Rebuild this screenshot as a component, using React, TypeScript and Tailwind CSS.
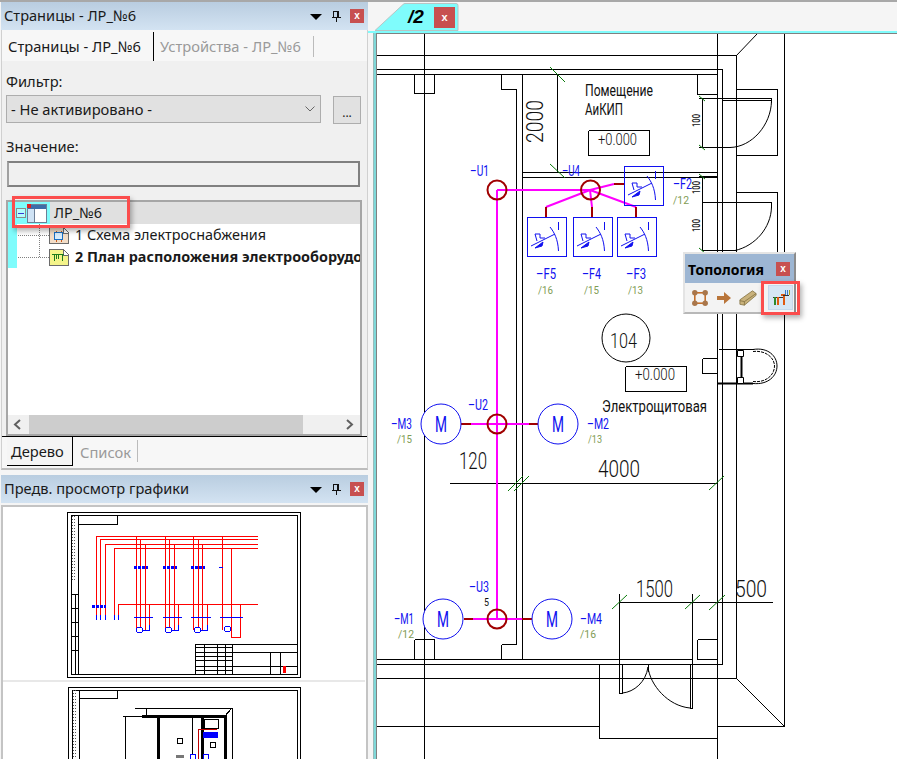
import React from "react";

const BLUE = "#1010f0";
const RED = "#a00000";
const MAG = "#ff00ff";

type Seg = [number, number, number, number];

const walls: Seg[] = [
  [376, 55, 736, 55], [376, 69, 722, 69], [376, 74, 717, 74],
  [424, 33, 424, 759], [717, 33, 717, 759], [784, 33, 784, 726],
  [736, 55, 736, 678], [722, 69, 722, 664], [516, 89, 516, 644], [522, 74, 522, 659],
  [414, 74, 414, 93], [434, 74, 434, 93], [414, 93, 434, 93],
  [501, 74, 501, 89], [501, 89, 516, 89],
  [697, 74, 697, 94], [697, 94, 717, 94],
  [522, 172, 717, 172], [522, 177, 717, 177],
  [557, 74, 557, 172],
  [736, 89, 777, 89], [777, 89, 777, 155], [736, 155, 777, 155],
  [736, 192, 777, 192], [777, 192, 777, 251],
  [698, 98, 771, 98], [722, 100, 771, 100], [771, 98, 771, 102], [702, 98, 702, 147], [698, 147, 730, 147],
  [698, 176, 717, 176], [702, 176, 702, 250], [702, 202, 771, 202], [771, 202, 771, 207], [702, 250, 735, 250],
  [702, 358, 717, 358], [702, 373, 717, 373], [702, 358, 702, 373],
  [718, 349, 753, 349],
  [414, 639, 414, 659], [434, 639, 434, 659], [414, 639, 434, 639],
  [501, 644, 501, 659], [501, 644, 516, 644],
  [697, 639, 717, 639], [697, 639, 697, 659], [697, 659, 717, 659],
  [376, 659, 692, 659], [376, 664, 722, 664], [376, 678, 736, 678], [376, 726, 599, 726],
  [599, 664, 599, 738], [599, 738, 717, 738], [717, 726, 784, 726],
  [449, 483, 717, 483],
  [619, 602, 772, 602], [619, 593, 619, 693], [692, 593, 692, 708],
  [622, 664, 622, 693], [619, 693, 622, 693], [690, 664, 690, 708], [690, 708, 692, 708],
  [625, 366, 686, 366], [625, 391, 686, 391], [625, 366, 625, 391], [686, 366, 686, 391],
  [588, 130, 649, 130], [588, 155, 649, 155], [588, 130, 588, 155], [649, 130, 649, 155],
];

const ticks: Seg[] = [
  [550, 67, 565, 82], [550, 164, 565, 178],
  [508, 491, 523, 476], [514, 491, 529, 476], [709, 490, 724, 476],
  [612, 609, 627, 595], [685, 609, 700, 595], [709, 610, 725, 595],
  [699, 96, 705, 101], [699, 145, 705, 150], [699, 174, 705, 179], [699, 248, 705, 253],
];

const segPath = (s: Seg[]) => s.map(([a, b, c, d]) => `M${a} ${b}L${c} ${d}`).join("");

function T({ x, y, w, s, c = "#111", t, rot, wt = 300 }: { x: number; y: number; w: number; s: number; c?: string; t: string; rot?: boolean; wt?: number }) {
  return (
    <text
      x={x}
      y={y}
      fontSize={s}
      fill={c}
      fontWeight={wt}
      textLength={w}
      lengthAdjust="spacingAndGlyphs"
      transform={rot ? `rotate(-90 ${x} ${y})` : undefined}
    >
      {t}
    </text>
  );
}

function Breaker({ x, y }: { x: number; y: number }) {
  return (
    <g transform={`translate(${x} ${y})`} fill="none" stroke={BLUE} strokeWidth="1">
      <rect x="0.5" y="0.5" width="39" height="39" />
      <path d="M31.5 5V13M23 10C27 15 31 22 31.5 34M4 29L28 17M8 17H13V21H18M8 17L10 24" />
      <path d="M8 31L16 25L15 29Z" fill={BLUE} />
    </g>
  );
}

function Motor({ x, y }: { x: number; y: number }) {
  return (
    <g>
      <circle cx={x} cy={y} r="20" fill="white" stroke={BLUE} />
      <T x={x - 6} y={y + 8} w={12} s={22} c={BLUE} t="M" wt={400} />
    </g>
  );
}

function Node({ x, y }: { x: number; y: number }) {
  return <circle cx={x} cy={y} r="9.5" fill="none" stroke={RED} strokeWidth="2" />;
}

function Plan() {
  return (
    <svg viewBox="377 34 520 725" className="w-[520px] h-[725px] block font-['Roboto',sans-serif]">
      <path d={segPath(walls)} transform="translate(.5 .5)" stroke="#000" fill="none" shapeRendering="crispEdges" />
      <path d={segPath(ticks)} stroke="#0a7a0a" fill="none" />
      {/* arcs and diagonals */}
      <path
        d="M736.5 55.5L757 34M736.5 678.5L784.5 726.5M771.5 101C771 125 752 147 730 147.5M771.5 207C771 228 755 246 735 250.5M622.5 693C634 692 646 682 648 667C650 685 668 706 690 708M648.5 664V672"
        stroke="#000"
        fill="none"
      />
      <circle cx="626" cy="338" r="24" fill="none" stroke="#000" />
      {/* door, lower right */}
      <path d="M718 383.5H753" stroke="#000" strokeWidth="2" />
      <path d="M741.5 356V377" stroke="#000" strokeWidth="2" />
      <path d="M737.5 350.5h6v6h-6zM737.5 377.5h6v6h-6z" fill="white" stroke="#000" />
      <path d="M753 349.5C768 347 777 356 777 366C777 376 768 385 753 383.5" fill="none" stroke="#000" strokeWidth="1" />
      <path d="M753 351.5C766 350 774.500 358 774.500 366C774.500 375 766 383 753 381.500" fill="none" stroke="#000" strokeDasharray="3 1" />
      {/* wires */}
      <path d="M497 190V618M497 190H590M590 190L546 207M590 190L592 207M590 190L636 207M590 190L614 184M471 424H529M473 619H522" stroke={MAG} strokeWidth="2" fill="none" />
      <path d="M546 207V217M592 207V217M636 207V217M614 184H624M461 424H471M529 424H539M464 619H473M522 619H532" stroke={RED} strokeWidth="2" fill="none" />
      <Node x={497} y={190} />
      <Node x={590.5} y={190} />
      <Node x={497} y={424} />
      <Node x={497} y={619} />
      <Breaker x={624} y={166} />
      <Breaker x={527} y={217} />
      <Breaker x={573} y={217} />
      <Breaker x={617} y={217} />
      <Motor x={441} y={424} />
      <Motor x={558} y={424} />
      <Motor x={443} y={619} />
      <Motor x={552} y={619} />
      {/* labels */}
      <T x={470} y={176} w={19} s={15} c={BLUE} t="–U1" wt={400} />
      <T x={562} y={176} w={18} s={15} c={BLUE} t="–U4" wt={400} />
      <T x={468} y={410} w={20} s={15} c={BLUE} t="–U2" wt={400} />
      <T x={469} y={592} w={20} s={15} c={BLUE} t="–U3" wt={400} />
      <T x={484} y={606} w={5} s={10} t="5" wt={400} />
      <T x={536} y={279} w={20} s={15} c={BLUE} t="–F5" wt={400} />
      <T x={582} y={279} w={19} s={15} c={BLUE} t="–F4" wt={400} />
      <T x={626} y={279} w={20} s={15} c={BLUE} t="–F3" wt={400} />
      <T x={673} y={189} w={19} s={15} c={BLUE} t="–F2" wt={400} />
      <T x={391} y={429} w={21} s={15} c={BLUE} t="–M3" wt={400} />
      <T x={587} y={429} w={22} s={15} c={BLUE} t="–M2" wt={400} />
      <T x={394} y={624} w={20} s={15} c={BLUE} t="–M1" wt={400} />
      <T x={580} y={624} w={22} s={15} c={BLUE} t="–M4" wt={400} />
      <T x={538} y={294} w={15} s={11} c="#7f9c55" t="/16" wt={400} />
      <T x={584} y={294} w={15} s={11} c="#7f9c55" t="/15" wt={400} />
      <T x={628} y={294} w={15} s={11} c="#7f9c55" t="/13" wt={400} />
      <T x={673} y={204} w={16} s={11} c="#7f9c55" t="/12" wt={400} />
      <T x={397} y={443} w={15} s={11} c="#7f9c55" t="/15" wt={400} />
      <T x={588} y={443} w={14} s={11} c="#7f9c55" t="/13" wt={400} />
      <T x={398} y={638} w={16} s={11} c="#7f9c55" t="/12" wt={400} />
      <T x={580} y={638} w={16} s={11} c="#7f9c55" t="/16" wt={400} />
      <T x={543} y={143} w={43} s={24} t="2000" rot />
      <T x={585} y={96} w={68} s={16} t="Помещение" wt={400} />
      <T x={585} y={115} w={38} s={16} t="АиКИП" wt={400} />
      <T x={598} y={145} w={39} s={17} t="+0.000" />
      <T x={610} y={348} w={27} s={21} t="104" />
      <T x={635} y={380} w={40} s={17} t="+0.000" />
      <T x={602} y={412} w={105} s={16} t="Электрощитовая" wt={400} />
      <T x={459} y={469} w={28} s={23} t="120" />
      <T x={598} y={477} w={42} s={23} t="4000" />
      <T x={636} y={597} w={37} s={23} t="1500" />
      <T x={735} y={597} w={32} s={23} t="500" />
      <T x={700} y={127} w={13} s={10} t="100" rot wt={500} />
      <T x={700} y={194} w={13} s={10} t="100" rot wt={500} />
      <T x={700} y={232} w={13} s={10} t="100" rot wt={500} />
    </svg>
  );
}

function PreviewColumn({ x1, x2, x3, x4, y1, y2, y3 }: { x1: number; x2: number; x3: number; x4: number; y1: number; y2: number; y3: number }) {
  return (
    <g>
      <path d={`M${x1} 536V630M${x2} ${y1}V630M${x3} ${y2}V630M${x4} 604V630`} stroke="#ff0000" fill="none" />
      <path d={`M${x1 - 3} 567.500h14`} stroke="#0000ff" strokeWidth="3" strokeDasharray="3 1" fill="none" />
      <path d={`M${x1 - 3} 617.500H${x4 + 3}`} stroke="#0000ff" fill="none" />
      <circle cx={x2 - 1} cy={y3} r="3" fill="white" stroke="#0000ff" />
      <path d={`M${x2 + 2} 630H${x4}V625`} stroke="#0000ff" fill="none" />
    </g>
  );
}

function Preview() {
  return (
    <svg viewBox="3 507 362 252" className="w-[362px] h-[252px] block font-['Roboto',sans-serif]" shapeRendering="crispEdges">
      <rect x="3" y="680" width="362" height="2" fill="#e8e8e8" />
      {/* sheet 1 */}
      <rect x="67.500" y="512.500" width="233" height="165" fill="white" stroke="#000" />
      <rect x="71.500" y="515.500" width="226" height="159" fill="none" stroke="#000" />
      <path d="M78.500 516V674M78 524.500H117.500V516M71 594.500H78M71 608.500H78M71 622.500H78M71 636.500H78M71 650.500H78M75.500 594V674" stroke="#000" fill="none" />
      <path d="M74.500 516V582M72.500 516V582" stroke="#555" strokeDasharray="1 2" fill="none" />
      <path d="M96.500 536.500H258M100.500 539.500H258M105.500 544.500H258M114.500 548.500H258M118.500 604.500H258M96.500 536V620M100.500 539V620M105.500 544V620M114.500 548V620M118.500 604V620M222.500 536V630M231.500 548V637.500H240.500V604" stroke="#ff0000" fill="none" />
      <PreviewColumn x1={136.5} x2={140.5} x3={145.5} x4={149.5} y1={539} y2={544} y3={630} />
      <PreviewColumn x1={165.5} x2={169.5} x3={174.5} x4={178.5} y1={539} y2={544} y3={630} />
      <PreviewColumn x1={193.5} x2={198.5} x3={202.5} x4={207.5} y1={539} y2={544} y3={630} />
      <path d="M92 606.500h14" stroke="#0000ff" strokeWidth="3" strokeDasharray="3 1" fill="none" />
      <path d="M96.500 615V620M100.500 615V620M105.500 615V620M114.500 615V620M118.500 615V620" stroke="#0000ff" fill="none" />
      <path d="M220 617.500H243M219 567.500h4" stroke="#0000ff" fill="none" />
      <circle cx="227.500" cy="629" r="3" fill="white" stroke="#0000ff" />
      <path d="M195.500 644V674M195 644.500H297M195 652.500H297M195 666.500H297M232.500 644V674M270.500 652V674M204.500 644V674M217.500 644V674M225.500 644V674M195 647.500H232M195 656.500H232M195 660.500H232M195 670.500H232M280.500 652V674" stroke="#000" fill="none" />
      <rect x="283" y="666" width="3" height="7" fill="#ff0000" />
      {/* sheet 2 */}
      <path d="M68.500 759V687.500H300V759M72.500 759V690.500H297.500V759M79.500 690V759M79 698.500H117.500V690" stroke="#000" fill="none" />
      <path d="M75.500 690V759M73.500 690V759" stroke="#555" strokeDasharray="1 2" fill="none" />
      <path d="M123 716.500H142M125.500 716V759M135 708.500H146.500V716M146 708.500H232.500V759M232 708L225 716M192.500 716V759" stroke="#000" fill="none" />
      <path d="M142 716.500H227M158.500 716V759M225.500 716V759M202.500 716V759" stroke="#000" strokeWidth="3" fill="none" />
      <rect x="203" y="732" width="15" height="6" fill="#0000ff" />
      <path d="M198.500 730V759M198 729.500H217" stroke="#c00000" fill="none" />
      <rect x="204" y="719" width="14" height="9" fill="white" stroke="#000" />
      <circle cx="180" cy="741" r="3" fill="white" stroke="#000" />
      <rect x="176" y="755" width="8" height="3" fill="#777" />
      <circle cx="193" cy="757" r="3" fill="white" stroke="#0000ff" />
      <circle cx="206" cy="757" r="3" fill="white" stroke="#0000ff" />
      <circle cx="213" cy="745" r="3" fill="white" stroke="#000" />
    </svg>
  );
}

function CloseBtn() {
  return (
    <div className="w-[14px] h-[14px] bg-[#c75050] flex items-center justify-center text-white text-[10px] font-bold leading-none font-['Liberation_Sans',sans-serif]">
      x
    </div>
  );
}

function TitleBar({ title }: { title: string }) {
  return (
    <div className="h-[28px] flex items-center pl-[3px] pr-[4px] bg-gradient-to-b from-[#b9cde0] to-[#d3e3f2]">
      <span className="flex-1 text-[14.6px] text-[#1a1a1a]">{title}</span>
      <svg width="12" height="6" viewBox="0 0 12 6" className="mr-[9px] mt-[2px]">
        <path d="M0 0H12L6 6Z" fill="#000" />
      </svg>
      <svg width="10" height="11" viewBox="0 0 10 11" className="mr-[9px]">
        <path d="M2.500 0.500H7.500V6.500H2.500ZM6 1V6M0.500 6.500H9.500M5 7V11" stroke="#111" fill="none" shapeRendering="crispEdges" />
      </svg>
      <CloseBtn />
    </div>
  );
}

function PageIcon({ plan }: { plan?: boolean }) {
  const fill = plan ? "#f4f48a" : "#f2ddc8";
  return (
    <svg width="20" height="17" viewBox="0 0 20 17" shapeRendering="crispEdges">
      <path d="M0.500 0.500H14L19.500 6V16.500H0.500Z" fill={fill} stroke="#6b6b6b" />
      <path d="M14 0.500V6H19.500" fill="#fff" stroke="#6b6b6b" />
      {plan ? (
        <path d="M3 5.500H15M5.500 5V12M9.500 6V10M7.500 6V10M13.500 6V12" stroke="#1c7c1c" fill="none" />
      ) : (
        <>
          <rect x="5.500" y="5.500" width="8" height="7" fill="#d8ecfb" stroke="#1a6fc4" />
          <path d="M7 3.500V5M12 3.500V5M7 13V14.500M12 13V14.500" stroke="#c85a1a" />
        </>
      )}
    </svg>
  );
}

export default function App() {
  return (
    <div className="relative w-[897px] h-[759px] overflow-hidden flex bg-[#f5f5f5] font-['Noto_Sans',sans-serif] text-[14.7px] text-[#1a1a1a]">
      {/* left column */}
      <div className="w-[368px] h-full flex flex-col">
        <div className="h-[2px] bg-[#a8a8a8]" />
        <div className="flex-1 flex flex-col pl-[1px]">
          <TitleBar title="Страницы - ЛР_№6" />
          <div className="h-[440px] flex flex-col border-b-2 border-[#bdbdbd] border-x border-x-[#d0d0d0]">
            {/* top tabs */}
            <div className="h-[32px] pt-[2px] flex items-stretch bg-[#f7f7f7] pl-[1px]">
              <div className="w-[151px] flex items-center pl-[5px] border-r border-black whitespace-nowrap">Страницы - ЛР_№6</div>
              <div className="flex items-center ml-[6px] text-[#9a9a9a] whitespace-nowrap">Устройства - ЛР_№6</div>
              <div className="ml-[12px] my-[4px] w-[1px] bg-[#bbbbbb]" />
            </div>
            {/* content */}
            <div className="flex-1 flex flex-col bg-[#f0f0f0] pl-[4px] pr-[4px]">
              <div className="h-[20px] mt-[10px] leading-[20px]">Фильтр:</div>
              <div className="flex mt-[4px] h-[28px]">
                <div className="w-[315px] bg-[#e1e1e1] border border-[#adadad] flex items-center pl-[4px] justify-between pr-[5px]">
                  <span>- Не активировано -</span>
                  <svg width="10" height="6" viewBox="0 0 10 6"><path d="M0.500 0.500L5 5L9.500 0.500" stroke="#666" fill="none" /></svg>
                </div>
                <div className="ml-[12px] w-[28px] h-[28px] mt-[1px] bg-[#e1e1e1] border border-[#adadad] flex items-end justify-center text-[12px] leading-[20px]">...</div>
              </div>
              <div className="h-[20px] mt-[13px] leading-[20px]">Значение:</div>
              <div className="mt-[5px] ml-[1px] w-[353px] h-[26px] bg-[#f0f0f0] border-2 border-t-[#808080] border-l-[#a0a0a0] border-r-[#808080] border-b-[#808080]" />
              {/* tree */}
              <div className="mt-[13px] w-[356px] h-[236px] bg-white border-2 border-[#a6a6a6] flex flex-col text-[14.4px]">
                <div className="flex-1 relative">
                  <div className="h-[22px] flex items-center bg-[#e0e0e0]">
                    <div className="w-[42px] h-[22px] bg-[#7ffcfc] flex items-center pl-[8px]">
                      <div className="w-[10px] h-[10px] border border-[#8a8a8a] bg-white/40 flex items-center justify-center">
                        <div className="w-[6px] h-[1px] bg-[#3a3ad0]" />
                      </div>
                      <svg width="20" height="19" viewBox="0 0 20 19" className="ml-[1px]" shapeRendering="crispEdges">
                        <rect x="0" y="0" width="20" height="19" fill="#6d7f96" />
                        <rect x="1" y="1" width="18" height="4" fill="#3c6ea8" />
                        <rect x="0" y="0" width="4" height="4" fill="#e02020" />
                        <rect x="1" y="5" width="6" height="13" fill="#cfe3f5" />
                        <rect x="8" y="5" width="11" height="13" fill="#ffffff" />
                      </svg>
                    </div>
                    <span className="ml-[4px]">ЛР_№6</span>
                  </div>
                  <div className="h-[22px] flex items-center">
                    <div className="w-[9px] h-[22px] bg-[#7ffcfc]" />
                    <div className="w-[31px] ml-[1px] border-b border-dotted border-[#808080]" />
                    <PageIcon />
                    <span className="ml-[6px]">1 Схема электроснабжения</span>
                  </div>
                  <div className="h-[22px] flex items-center overflow-hidden">
                    <div className="w-[9px] h-[22px] bg-[#7ffcfc] shrink-0" />
                    <div className="w-[31px] ml-[1px] border-b border-dotted border-[#808080] shrink-0" />
                    <div className="shrink-0 flex"><PageIcon plan /></div>
                    <span className="ml-[6px] font-bold whitespace-nowrap">2 План расположения электрооборудования</span>
                  </div>
                  <div className="absolute left-[31px] top-[22px] h-[33px] border-l border-dotted border-[#808080]" />
                </div>
                <div className="h-[19px] bg-[#f0f0f0] flex items-center">
                  <svg width="21" height="19" viewBox="0 0 21 19"><path d="M12 5L7 9.500L12 14" stroke="#606060" strokeWidth="2" fill="none" /></svg>
                  <div className="w-[274px] h-[19px] bg-[#cdcdcd]" />
                  <div className="flex-1" />
                  <svg width="21" height="19" viewBox="0 0 21 19"><path d="M8 5L13 9.500L8 14" stroke="#606060" strokeWidth="2" fill="none" /></svg>
                </div>
              </div>
            </div>
            {/* bottom tabs */}
            <div className="h-[33px] flex items-start bg-[#f7f7f7] border-t border-black pl-[5px]">
              <div className="w-[66px] h-[29px] bg-[#f5f5f5] flex items-center pl-[4px] border-r border-b border-black">Дерево</div>
              <div className="h-[29px] flex items-center ml-[7px] text-[#9a9a9a]">Список</div>
              <div className="ml-[6px] mt-[3px] w-[1px] h-[22px] bg-[#bbbbbb]" />
            </div>
          </div>
          <div className="h-[5px]" />
          <TitleBar title="Предв. просмотр графики" />
          <div className="mt-[2px] flex-1 bg-white border-2 border-[#c4c4c4] border-b-0 overflow-hidden">
            <Preview />
          </div>
        </div>
      </div>

      {/* right side */}
      <div className="flex-1 h-full flex flex-col">
        <div className="h-[2px] bg-[#a8a8a8]" />
        <div className="relative h-[29px] bg-[#f5f5f5]">
          <svg width="92" height="29" viewBox="368 2 92 29" className="absolute left-0 top-0">
            <path d="M375 30.500L403 4.500Q404 3.500 405 3.500H456Q458 3.500 458 5.500V30.500Z" fill="#7ffcfc" stroke="#b8c4c4" />
          </svg>
          <span className="absolute left-[40px] top-[4px] text-[19px] font-bold italic text-black leading-[22px] font-['Liberation_Sans',sans-serif]">/2</span>
          <div className="absolute left-[66px] top-[5px] w-[21px] h-[21px] bg-[#c75050] flex items-center justify-center text-white text-[11px] font-bold font-['Liberation_Sans',sans-serif]">x</div>
        </div>
        <div className="h-[2px] bg-[#7ffcfc]" />
        <div className="flex-1 flex ml-[5px]">
          <div className="w-[3px] bg-[#7fd8d8] border-l border-[#99bbbb]" />
          <div className="flex-1 bg-white border-l border-t border-[#808080] overflow-hidden">
            <Plan />
          </div>
        </div>
      </div>

      {/* floating toolbar */}
      <div className="absolute left-[683px] top-[252px] w-[113px] h-[62px] flex flex-col bg-[#f3f3f3] border-2 border-t-[#e4e4e4] border-l-[#e4e4e4] border-r-[#8c8c8c] border-b-[#b8b8b8]">
        <div className="h-[29px] bg-[#9db6d3] flex items-center justify-between pl-[3px] pr-[4px]">
          <span className="text-[14px] font-bold text-black whitespace-nowrap pt-[2px]">Топология</span>
          <CloseBtn />
        </div>
        <div className="flex-1 flex items-center pl-[7px]">
          <svg width="16" height="16" viewBox="0 0 20 20">
            <rect x="3.500" y="3.500" width="13" height="13" fill="none" stroke="#c4702c" strokeWidth="2" />
            <circle cx="3.500" cy="3.500" r="3.400" fill="#a9764a" />
            <circle cx="16.500" cy="3.500" r="3.400" fill="#a9764a" />
            <circle cx="3.500" cy="16.500" r="3.400" fill="#a9764a" />
            <circle cx="16.500" cy="16.500" r="3.400" fill="#a9764a" />
          </svg>
          <svg width="20" height="20" viewBox="0 0 20 20" className="ml-[6px]">
            <path d="M3 8H10V4L17 10L10 16V12H3Z" fill="#b9753a" />
          </svg>
          <svg width="18" height="18" viewBox="0 0 20 20" className="ml-[5px]">
            <path d="M1 12L15 2L19 5L19 7L6 18L1 17Z" fill="#c9b27c" stroke="#7a6a3a" strokeWidth="0.800" />
            <path d="M1 13L6 14L19 5M6 14V18" fill="none" stroke="#7a6a3a" strokeWidth="0.800" />
          </svg>
          <div className="ml-[11px] w-[25px] h-[25px] bg-[#d5e6f5] border border-[#c5d9ec] flex items-center justify-center">
            <svg width="18" height="16" viewBox="0 0 18 16" shapeRendering="crispEdges">
              <path d="M1 7H11" stroke="#333" strokeWidth="1" />
              <path d="M3 7V15" stroke="#2d8a2d" strokeWidth="1.500" />
              <path d="M6 7V15" stroke="#e05a10" strokeWidth="1.500" />
              <path d="M9 5H12V15" stroke="#e05a10" strokeWidth="1.500" fill="none" />
              <path d="M13 5V0M15 5V0" stroke="#3a7ac8" strokeWidth="1" />
              <path d="M17 5V0" stroke="#a8a020" strokeWidth="1" />
              <path d="M11 5H17" stroke="#333" strokeWidth="1" />
            </svg>
          </div>
        </div>
      </div>

      {/* red highlights */}
      <div className="absolute left-[12px] top-[196px] w-[118px] h-[32px] border-[3px] border-[#fb4d4d] shadow-[2px_3px_5px_rgba(0,0,0,0.3)]" />
      <div className="absolute left-[761px] top-[281px] w-[39px] h-[34px] border-[3px] border-[#fb4d4d] shadow-[2px_3px_5px_rgba(0,0,0,0.3)]" />
    </div>
  );
}
